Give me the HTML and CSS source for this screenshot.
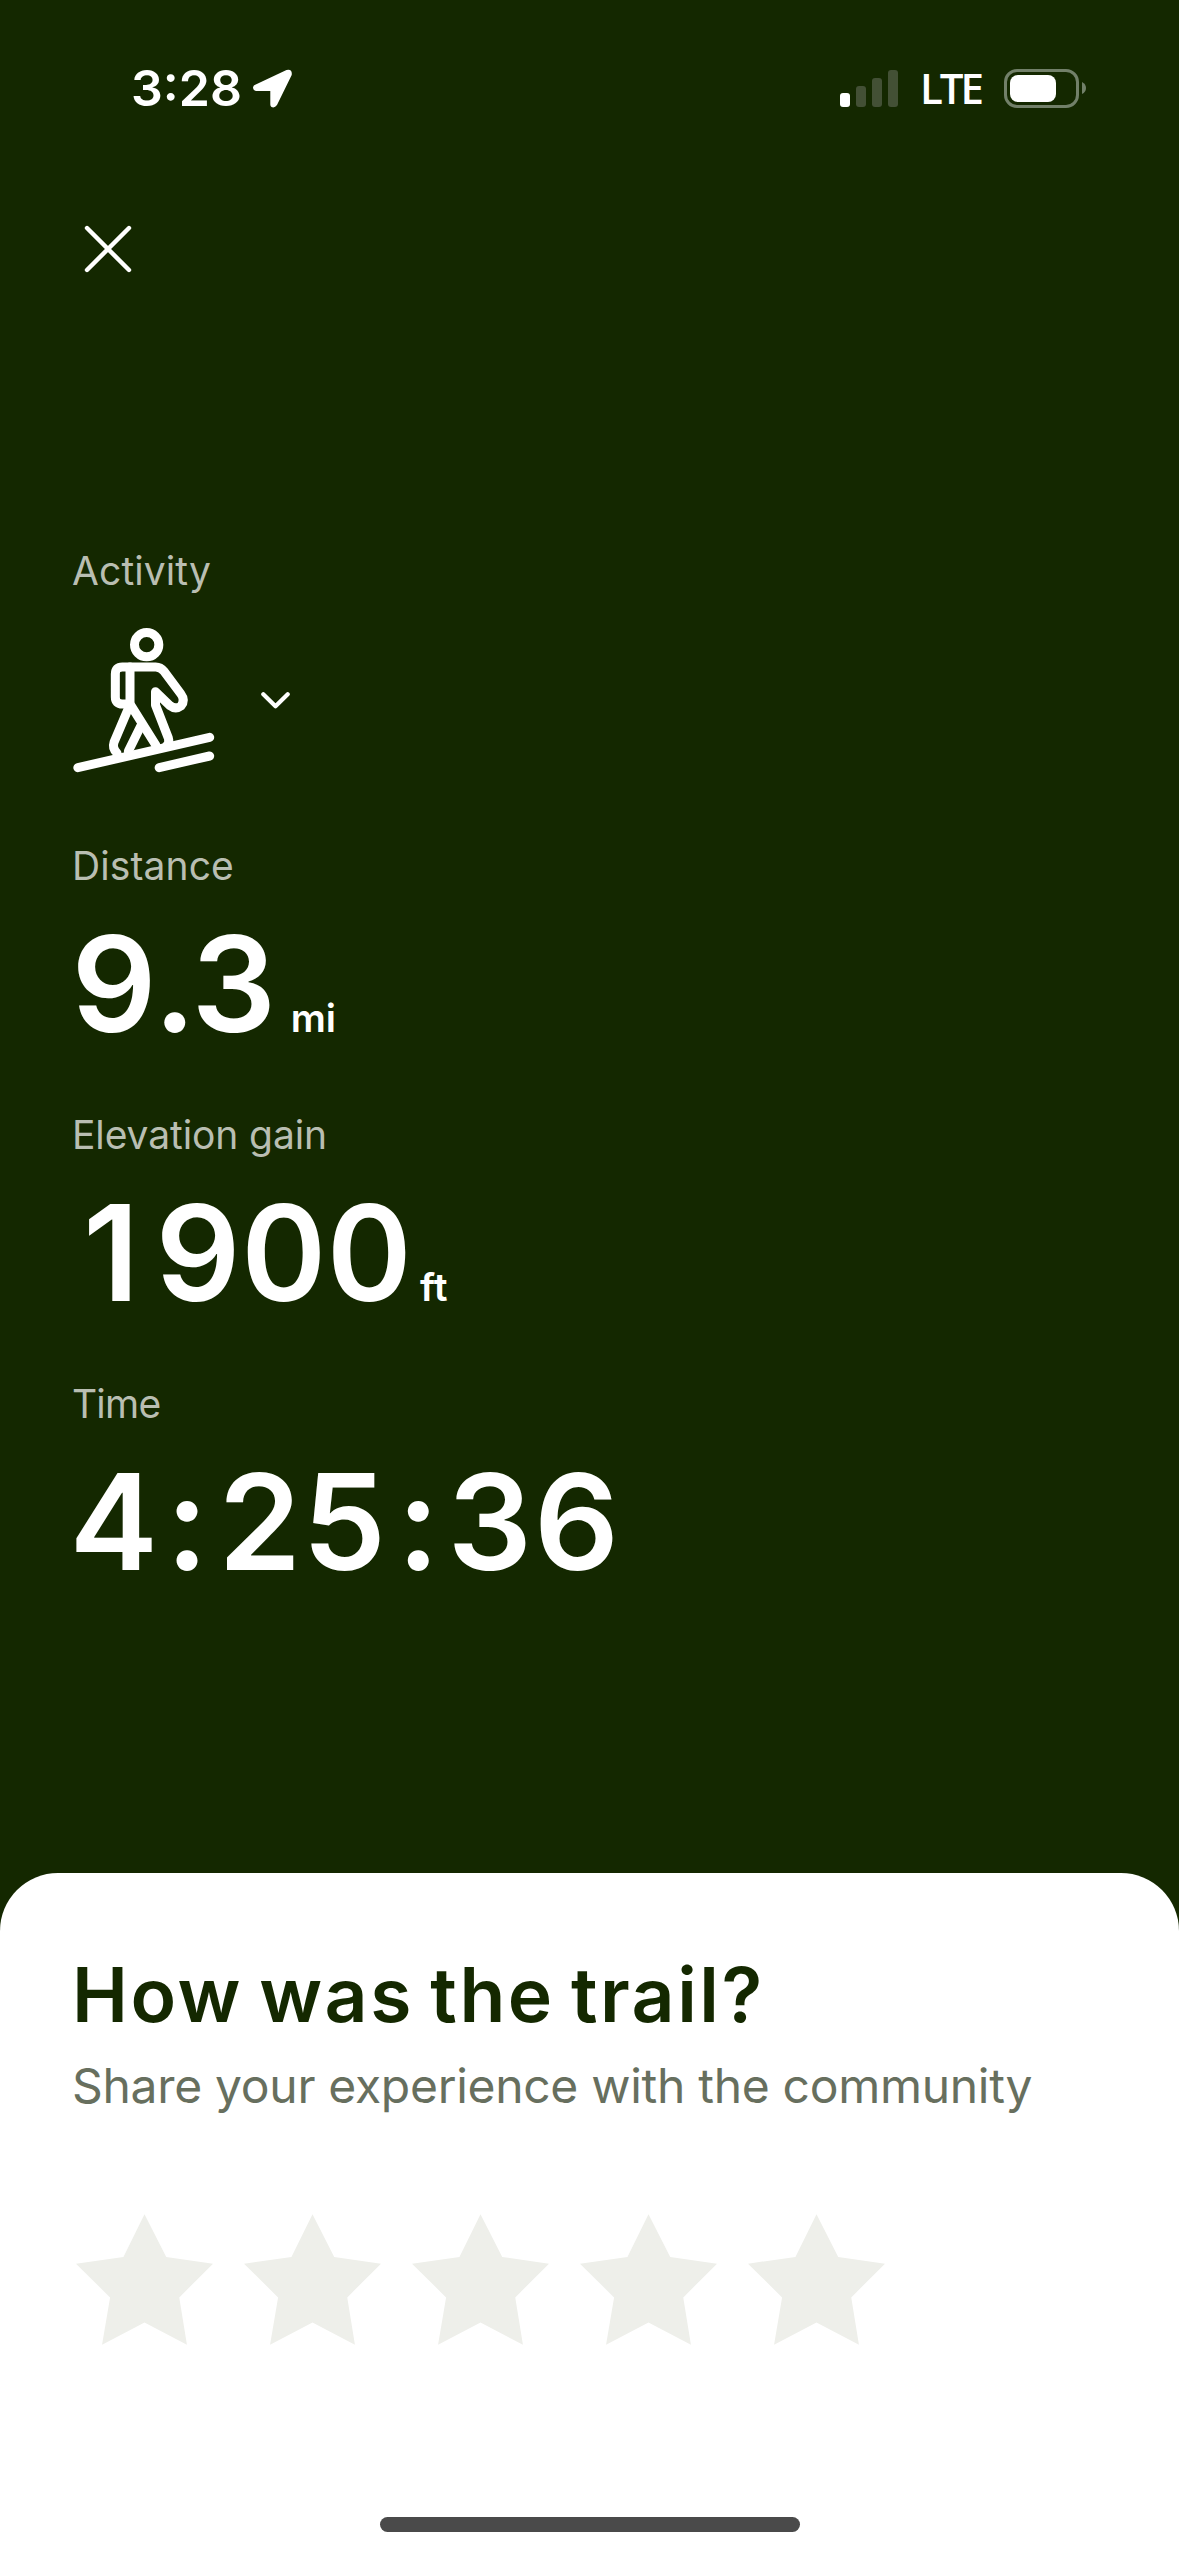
FILE: index.html
```html
<!DOCTYPE html>
<html lang="en">
<head>
    <meta charset="UTF-8">
    <meta name="viewport" content="width=device-width, initial-scale=1.0">
    <title>Activity summary</title>
    <link rel="stylesheet" href="styles.css">
</head>
<body>
    <div class="status-bar">
        <span class="clock">3:28</span>
        <svg class="location" viewBox="0 0 39 39">
            <path d="M3.8 15 L33.5 1 Q39.5 -0.5 38.7 6 L24 36 Q21.5 39.5 18.5 38 Q17.300 37 17.300 35.500 V22 H3.500 Q0 21.500 0 18.300 Q0.300 16.300 3.800 15 Z" fill="#fff"/>
        </svg>
        <svg class="signal" viewBox="0 0 58 37">
            <rect x="0" y="23" width="10" height="14" rx="3" fill="#fff"/>
            <rect x="16" y="16" width="10" height="21" rx="3" fill="#435035"/>
            <rect x="32" y="8" width="10" height="29" rx="3" fill="#435035"/>
            <rect x="48" y="0" width="10" height="37" rx="3" fill="#435035"/>
        </svg>
        <span class="network">LTE</span>
        <svg class="battery" viewBox="0 0 83 39">
            <rect x="1.500" y="1.500" width="72" height="36" rx="11.500" fill="none" stroke="#728069" stroke-width="3"/>
            <rect x="6" y="6" width="46" height="27" rx="8" fill="#fff"/>
            <path d="M78 13 Q82 15 82 19 Q82 23 78 25 Z" fill="#728069"/>
        </svg>
    </div>

    <div class="toolbar">
        <svg class="close" viewBox="0 0 48 48">
            <path d="M3 3 L45 45 M45 3 L3 45" stroke="#fff" stroke-width="4.400" stroke-linecap="round"/>
        </svg>
    </div>

    <div class="stats">
        <div class="stat activity">
            <div class="label">Activity</div>
            <div class="activity-picker">
                <svg class="hiker" viewBox="70 290 426 438" fill="none" stroke="#fff" stroke-width="27" stroke-linecap="round" stroke-linejoin="round">
                    <circle cx="291" cy="343" r="36.500"/>
                    <path d="M241 521 H218 Q197 521 197 500 V431 Q197 410 218 410 H318 Q333 410 343 423 L393 490 Q408 510 394 527 Q378 539 361 526 L317.500 484 V524 L356 623 Q361 638 349 648"/>
                    <path d="M241 410 V521 L319 645"/>
                    <path d="M238 530 L193 636 Q187 654 202 668"/>
                    <path d="M273 588 L236 663"/>
                    <path d="M84.500 712 L480 621"/>
                    <path d="M328.500 712 L480 677"/>
                </svg>
                <svg class="chevron" viewBox="0 0 29 17">
                    <path d="M2.300 2.300 L14.500 14.300 L26.700 2.300" fill="none" stroke="#fff" stroke-width="4.200" stroke-linecap="round" stroke-linejoin="round"/>
                </svg>
            </div>
        </div>
        <div class="stat">
            <div class="label">Distance</div>
            <div class="value"><span class="number">9.3</span><span class="unit">mi</span></div>
        </div>
        <div class="stat">
            <div class="label elevation-label">Elevation gain</div>
            <div class="value"><span class="number"><span class="one">1</span>900</span><span class="unit ft">ft</span></div>
        </div>
        <div class="stat">
            <div class="label time-label">Time</div>
            <div class="value"><span class="number">4<span class="colon">:</span>25<span class="colon">:</span>36</span></div>
        </div>
    </div>

    <div class="sheet">
        <h1>How was the trail?</h1>
        <p class="subtitle">Share your experience with the community</p>
        <div class="stars">
            <svg class="star" viewBox="77 102 410 391"><path d="M282 102 L347 230 L487 250 L386 351 L409 493 L282 426 L155 493 L179 351 L77 250 L219 230 Z"/></svg>
            <svg class="star" viewBox="77 102 410 391"><path d="M282 102 L347 230 L487 250 L386 351 L409 493 L282 426 L155 493 L179 351 L77 250 L219 230 Z"/></svg>
            <svg class="star" viewBox="77 102 410 391"><path d="M282 102 L347 230 L487 250 L386 351 L409 493 L282 426 L155 493 L179 351 L77 250 L219 230 Z"/></svg>
            <svg class="star" viewBox="77 102 410 391"><path d="M282 102 L347 230 L487 250 L386 351 L409 493 L282 426 L155 493 L179 351 L77 250 L219 230 Z"/></svg>
            <svg class="star" viewBox="77 102 410 391"><path d="M282 102 L347 230 L487 250 L386 351 L409 493 L282 426 L155 493 L179 351 L77 250 L219 230 Z"/></svg>
        </div>
        <div class="home-indicator"></div>
    </div>
</body>
</html>
```

FILE: styles.css
```css
* {
    box-sizing: border-box;
}
body {
    margin: 0;
    width: 1179px;
    height: 2556px;
    display: flex;
    flex-direction: column;
    background-color: #142800;
    color: #fff;
    font-family: Inter, "Liberation Sans", sans-serif;
    overflow: hidden;
}
svg {
    display: block;
    flex: none;
}
.status-bar {
    height: 176px;
    padding: 0 92px 0 131px;
    display: flex;
    align-items: center;
}
.clock {
    font-size: 50px;
    font-weight: 600;
    letter-spacing: 0;
    width: 122px;
    margin-top: -1px;
    white-space: nowrap;
}
.location {
    width: 39px;
    height: 39px;
}
.signal {
    width: 58px;
    height: 37px;
    margin-left: auto;
}
.network {
    font-family: "Open Sans", "Noto Sans", sans-serif;
    font-size: 42px;
    font-weight: 600;
    letter-spacing: -3px;
    width: 84px;
    margin: -2px 0 0 22px;
    white-space: nowrap;
}
.battery {
    width: 83px;
    height: 39px;
}
.toolbar {
    height: 364px;
    padding: 49px 84px 0;
}
.close {
    width: 48px;
    height: 48px;
}
.stats {
    flex: 1;
    padding-left: 72px;
}
.stat {
    height: 269px;
}
.stat.activity {
    height: 295px;
}
.label {
    height: 62px;
    line-height: 62px;
    font-size: 39px;
    letter-spacing: 0.1px;
    color: #b9beb2;
    white-space: nowrap;
}
.elevation-label {
    letter-spacing: -0.1px;
}
.time-label {
    letter-spacing: -0.8px;
}
.activity-picker {
    display: flex;
    align-items: center;
    gap: 46px;
    padding: 25px 0 0 1px;
}
.hiker {
    width: 142px;
    height: 146px;
}
.chevron {
    width: 29px;
    height: 17px;
}
.value {
    display: flex;
    align-items: baseline;
    height: 174px;
    line-height: 174px;
    white-space: nowrap;
}
.number {
    margin-left: -1px;
    font-size: 133px;
    font-weight: 600;
    letter-spacing: -0.4px;
    font-variant-numeric: tabular-nums;
}
.one {
    display: inline-block;
    width: 84px;
    padding-left: 12px;
    font-variant-numeric: normal;
}
.colon {
    display: inline-block;
    width: 60px;
    text-align: center;
}
.unit {
    font-size: 39px;
    font-weight: 600;
    margin-left: 13px;
}
.unit.ft {
    margin-left: 8px;
}
.sheet {
    height: 683px;
    padding: 76px 72px 24px;
    display: flex;
    flex-direction: column;
    background-color: #fff;
    border-radius: 58px 58px 0 0;
}
h1 {
    margin: 0;
    height: 92px;
    line-height: 92px;
    font-size: 75px;
    font-weight: 600;
    letter-spacing: 2.5px;
    word-spacing: -5px;
    color: #142800;
    white-space: nowrap;
}
.subtitle {
    margin: 13px 0 0;
    height: 64px;
    line-height: 64px;
    font-size: 48px;
    letter-spacing: -0.3px;
    color: #676f5e;
    white-space: nowrap;
}
.stars {
    display: flex;
    gap: 31px;
    margin: 96px 0 0 3.5px;
}
.star {
    width: 137px;
    height: 131px;
    fill: #eeefea;
}
.home-indicator {
    width: 420px;
    height: 15px;
    margin: auto auto 0;
    border-radius: 8px;
    background-color: #4a4a4a;
}
```
